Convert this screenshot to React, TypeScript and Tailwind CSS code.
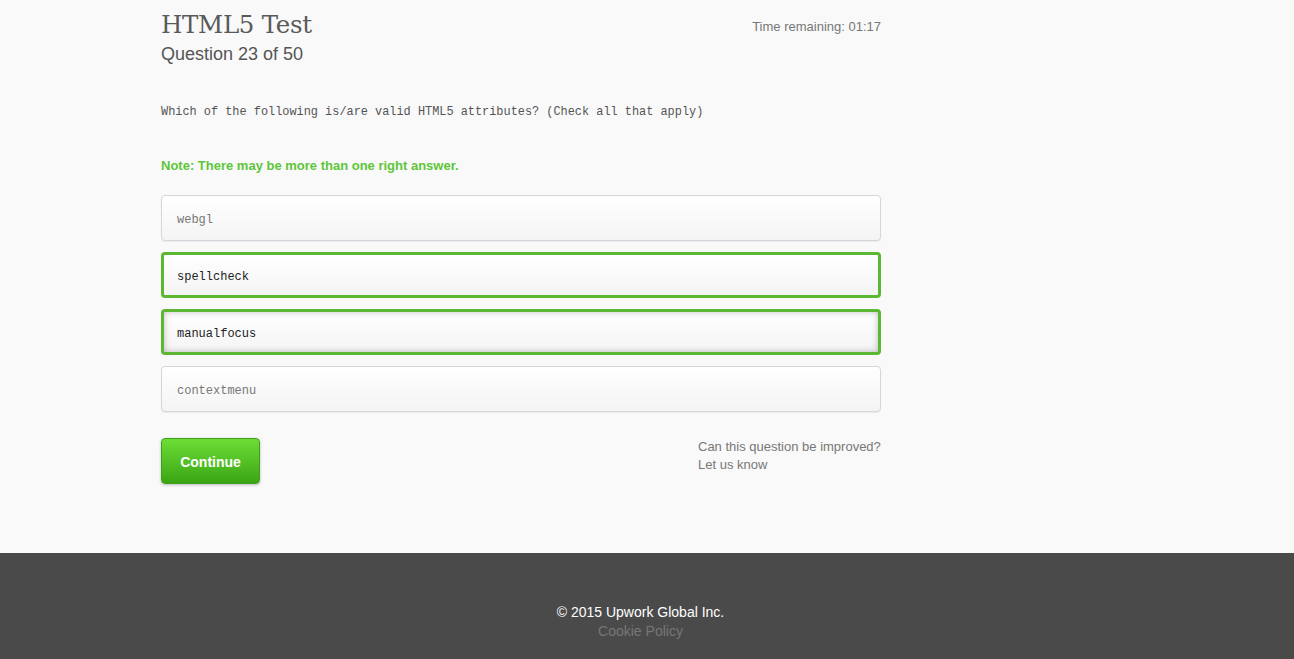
// Upwork スキルテスト: 複数選択問題の画面
import { useState } from 'react';

const options = ['webgl', 'spellcheck', 'manualfocus', 'contextmenu'];

export default function App() {
  const [picked, setPicked] = useState<string[]>(['spellcheck', 'manualfocus']);
  const focused = 'manualfocus';

  const toggle = (o: string) =>
    setPicked((p) => (p.includes(o) ? p.filter((x) => x !== o) : [...p, o]));

  return (
    <div className="min-h-screen bg-[#f9f9f9] flex flex-col font-['Liberation_Sans',Arial,sans-serif]">
      <main className="flex-1 h-[553px]">
        <div className="ml-[161px] w-[720px]">
          {/* ヘッダー: テスト名・問題番号・残り時間 */}
          <div className="flex justify-between items-start">
            <div>
              <h1 className="text-[24.5px] leading-[36px] pt-[7px] text-[#5a5a5a] font-['DejaVu_Serif',serif] tracking-[-0.3px]">
                HTML5 Test
              </h1>
              <p className="text-[18px] leading-[22px] mt-[0px] text-[#555]">Question 23 of 50</p>
            </div>
            <p className="text-[13px] leading-[16px] mt-[19px] text-[#777]">Time remaining: 01:17</p>
          </div>

          {/* 問題文 */}
          <p className="mt-[39px] text-[11.9px] leading-[16px] text-[#555] font-['Liberation_Mono',monospace]">
            Which of the following is/are valid HTML5 attributes? (Check all that apply)
          </p>

          <p className="mt-[38px] text-[13px] leading-[16px] font-bold text-[#5ec639]">
            Note: There may be more than one right answer.
          </p>

          {/* 選択肢 */}
          <div className="mt-[21px] flex flex-col gap-[11px]">
            {options.map((o) => {
              const on = picked.includes(o);
              return (
                <button
                  key={o}
                  onClick={() => toggle(o)}
                  className={
                    'h-[46px] w-full text-left rounded-[4px] pt-[3px] bg-gradient-to-b from-white to-[#f4f4f4] font-["Liberation_Mono",monospace] text-[12px] ' +
                    (on
                      ? 'border-[3px] border-[#5cb833] pl-[13px] text-[#222] '
                      : 'border border-[#d4d5dd] pl-[15px] text-[#777] shadow-[0_1px_1px_rgba(0,0,0,0.06)] ') +
                    (o === focused ? 'shadow-[inset_0_0_6px_rgba(0,0,0,0.25)]' : '')
                  }
                >
                  {o}
                </button>
              );
            })}
          </div>

          {/* 送信ボタンと改善リンク */}
          <div className="mt-[26px] flex justify-between items-start">
            <button className="w-[99px] h-[46px] pt-[2px] rounded-[4px] bg-gradient-to-b from-[#6cde35] to-[#3aa514] border border-[#3f9f1c] text-white font-bold text-[14px] shadow-[0_1px_3px_rgba(0,0,0,0.25)]">
              Continue
            </button>
            <div className="w-[183px] mt-[0px] text-[13px] leading-[18px] text-[#777] whitespace-nowrap">
              <p>Can this question be improved?</p>
              <p>Let us know</p>
            </div>
          </div>
        </div>
      </main>

      {/* フッター */}
      <footer className="bg-[#4a4a4a] h-[106px] pt-[50px]">
        <div className="w-[1281px] text-center text-[14px] leading-[19px]">
          <p className="text-white">© 2015 Upwork Global Inc.</p>
          <p className="text-[#777]">Cookie Policy</p>
        </div>
      </footer>
    </div>
  );
}
